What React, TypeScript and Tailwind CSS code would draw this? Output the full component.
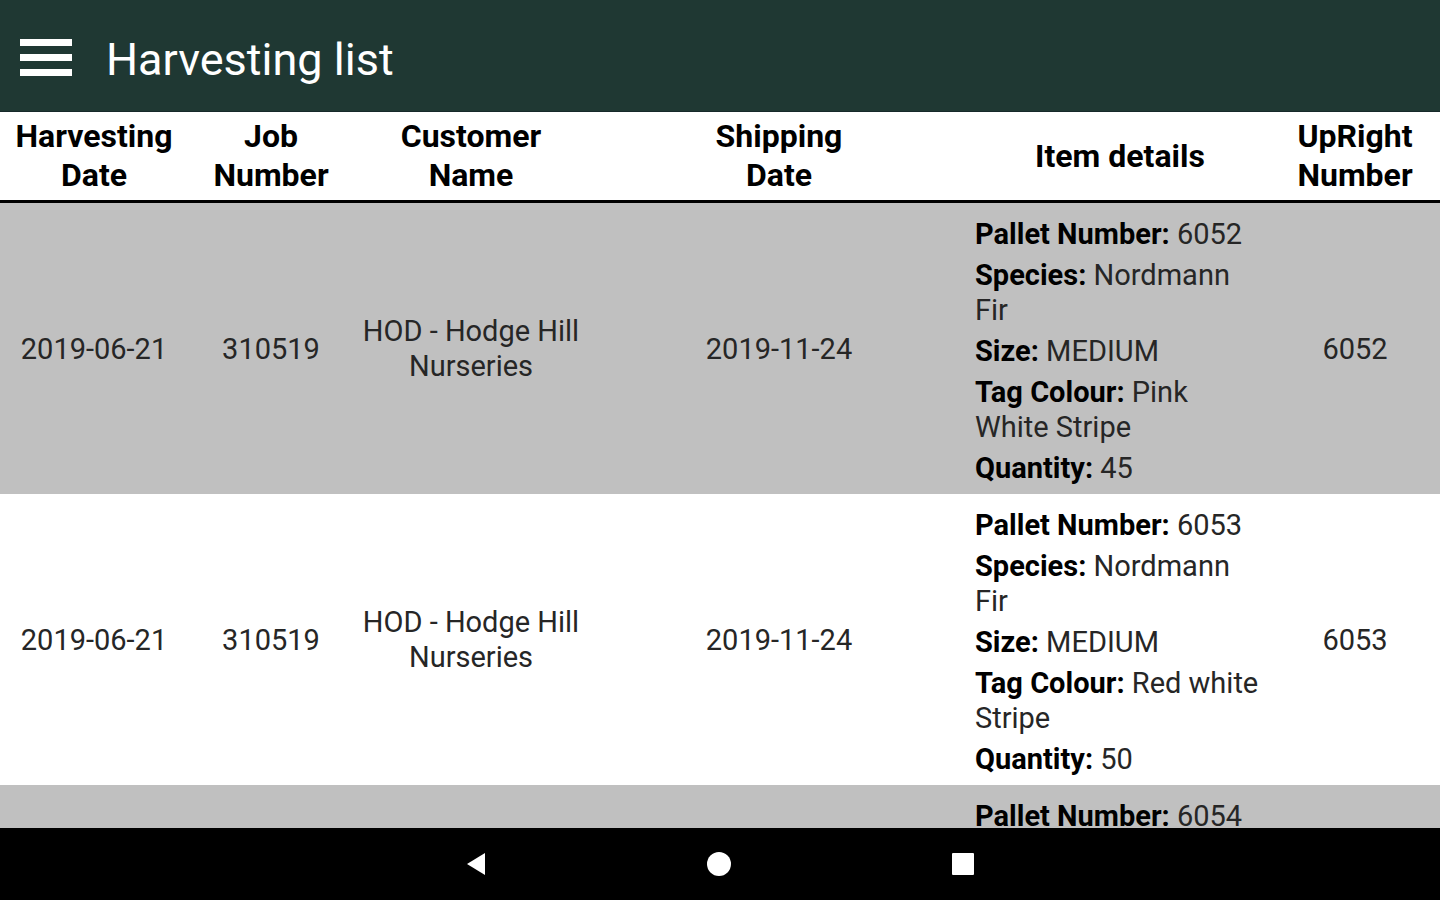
const rows = [
  {
    harvest: '2019-06-21',
    job: '310519',
    customer: 'HOD - Hodge Hill Nurseries',
    shipping: '2019-11-24',
    pallet: '6052',
    species: 'Nordmann Fir',
    size: 'MEDIUM',
    tag: 'Pink White Stripe',
    qty: '45',
    upright: '6052',
  },
  {
    harvest: '2019-06-21',
    job: '310519',
    customer: 'HOD - Hodge Hill Nurseries',
    shipping: '2019-11-24',
    pallet: '6053',
    species: 'Nordmann Fir',
    size: 'MEDIUM',
    tag: 'Red white Stripe',
    qty: '50',
    upright: '6053',
  },
  {
    harvest: '2019-06-21',
    job: '310519',
    customer: 'HOD - Hodge Hill Nurseries',
    shipping: '2019-11-24',
    pallet: '6054',
    species: 'Nordmann Fir',
    size: 'MEDIUM',
    tag: 'Pink White Stripe',
    qty: '40',
    upright: '6054',
  },
];

const cols = 'grid grid-cols-[188px_166px_234px_382px_300px_170px]';

function Detail({ label, value }: { label: string; value: string }) {
  return (
    <p className="leading-[35px]">
      <span className="font-bold text-black">{label}:</span> {value}
    </p>
  );
}

export default function App() {
  return (
    <div className="w-[1440px] h-[900px] flex flex-col overflow-hidden bg-white font-['Roboto','Liberation_Sans',sans-serif]">
      {/* App bar */}
      <div className="h-[112px] shrink-0 bg-[#1f3833] flex items-center border-b border-[#16292a]">
        <div className="ml-[20px] w-[52px] flex flex-col gap-[8px] pt-[4px]">
          <span className="h-[7px] bg-white" />
          <span className="h-[7px] bg-white" />
          <span className="h-[7px] bg-white" />
        </div>
        <h1 className="ml-[34px] text-[45px] text-white leading-none pt-[8px]">Harvesting list</h1>
      </div>

      {/* Table header */}
      <div className={`${cols} shrink-0 h-[91px] border-b-[3px] border-black text-[32px] font-bold text-black leading-[39px] text-center`}>
        <div className="flex items-center justify-center">Harvesting<br />Date</div>
        <div className="flex items-center justify-center">Job<br />Number</div>
        <div className="flex items-center justify-center">Customer<br />Name</div>
        <div className="flex items-center justify-center">Shipping<br />Date</div>
        <div className="flex items-center justify-center">Item details</div>
        <div className="flex items-center justify-center">UpRight<br />Number</div>
      </div>

      {/* Rows */}
      <div className="flex-1 overflow-hidden">
        {rows.map((r, i) => (
          <div
            key={r.pallet}
            className={`${cols} text-[29px] text-[#262626] ${i % 2 === 0 ? 'bg-[#c0c0c0]' : 'bg-white'}`}
          >
            <div className="flex items-center justify-center pt-[3px]">{r.harvest}</div>
            <div className="flex items-center justify-center pt-[3px]">{r.job}</div>
            <div className="flex items-center justify-center text-center leading-[35px] px-[4px]">{r.customer}</div>
            <div className="flex items-center justify-center pt-[3px]">{r.shipping}</div>
            <div className="pl-[5px] pt-[14px] pb-[8px] w-[293px] flex flex-col gap-[6px]">
              <Detail label="Pallet Number" value={r.pallet} />
              <Detail label="Species" value={r.species} />
              <Detail label="Size" value={r.size} />
              <Detail label="Tag Colour" value={r.tag} />
              <Detail label="Quantity" value={r.qty} />
            </div>
            <div className="flex items-center justify-center pt-[3px]">{r.upright}</div>
          </div>
        ))}
      </div>

      {/* System nav bar */}
      <div className="h-[72px] shrink-0 bg-black flex items-center justify-center gap-[219px]">
        <svg width="22" height="24" viewBox="0 0 22 24">
          <path d="M20 1 L2 12 L20 23 Z" fill="white" />
        </svg>
        <svg width="26" height="26" viewBox="0 0 26 26">
          <circle cx="13" cy="13" r="12" fill="white" />
        </svg>
        <svg width="24" height="24" viewBox="0 0 24 24">
          <rect x="1" y="1" width="22" height="22" rx="1" fill="white" />
        </svg>
      </div>
    </div>
  );
}
